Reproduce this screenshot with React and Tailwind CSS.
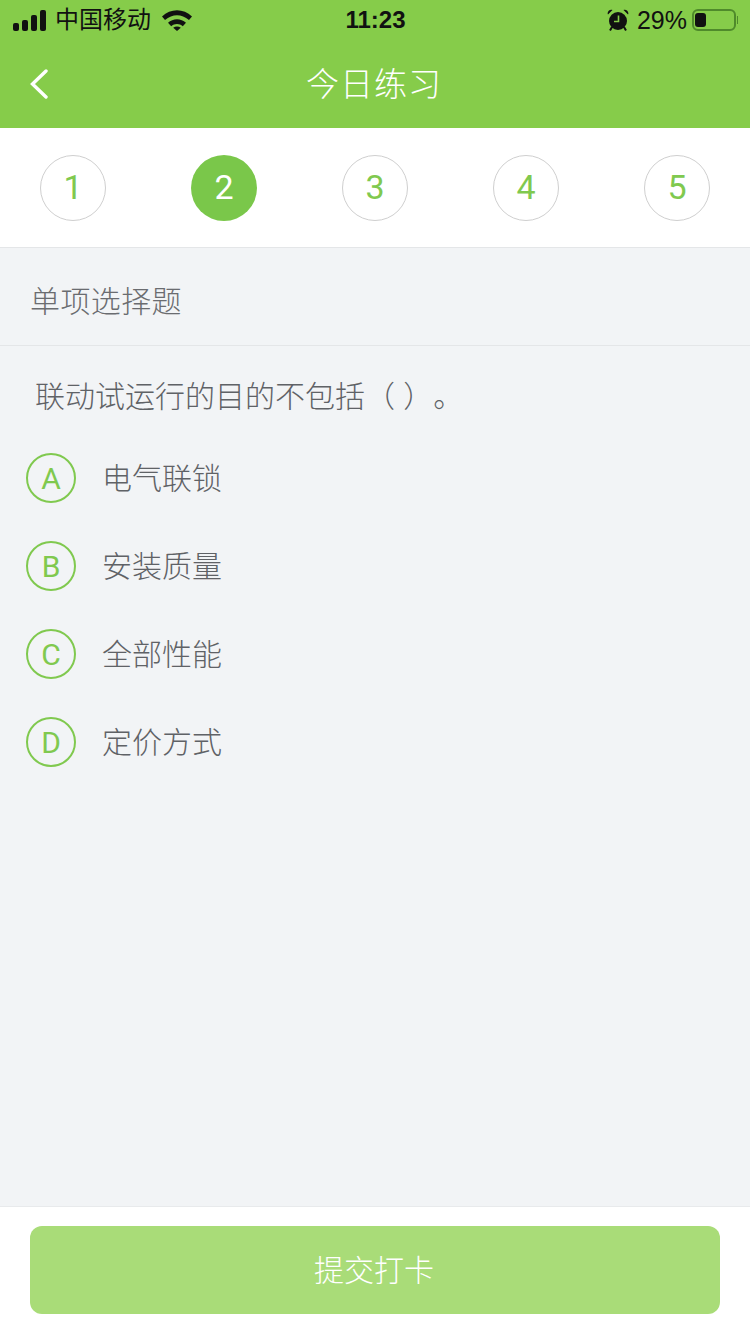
const FONT = "font-['Liberation_Sans','Noto_Sans_CJK_SC',sans-serif]";
const DIGITS = "font-['Roboto','Liberation_Sans',sans-serif] font-normal";

const steps = [1, 2, 3, 4, 5];
const options = [
  { key: 'A', text: '电气联锁' },
  { key: 'B', text: '安装质量' },
  { key: 'C', text: '全部性能' },
  { key: 'D', text: '定价方式' },
];

function SignalIcon() {
  return (
    <svg width="33" height="21" viewBox="0 0 33 21" fill="#111">
      <rect x="0" y="13" width="6" height="8" rx="2" />
      <rect x="9" y="10" width="6" height="11" rx="2" />
      <rect x="18" y="5" width="6" height="16" rx="2" />
      <rect x="27" y="0" width="6" height="21" rx="2" />
    </svg>
  );
}

function WifiIcon() {
  return (
    <svg width="30" height="21" viewBox="0 0 30 21" fill="#111">
      <path d="M0 6.5 C8.5 -2 21.5 -2 30 6.5 L27 10 C19.5 3.5 10.5 3.5 3 10 Z" />
      <path d="M6 12.8 C11 8 19 8 24 12.8 L20.8 16.2 C17.5 13.2 12.5 13.2 9.2 16.2 Z" />
      <path d="M11.2 17.8 C13.5 16 16.5 16 18.8 17.8 L15 21 Z" />
    </svg>
  );
}

function AlarmIcon() {
  return (
    <svg width="22" height="22" viewBox="0 0 22 22">
      <circle cx="11" cy="12" r="9" fill="#111" />
      <path d="M11.5 6.5 V12.5 H7" stroke="#86cc4a" strokeWidth="1.6" fill="none" />
      <path d="M1 5.5 L5.5 1 C3 -0.5 -0.5 3 1 5.5 Z M21 5.5 L16.5 1 C19 -0.5 22.5 3 21 5.5 Z" fill="#111" />
      <path d="M5 18 L3 21.5 M17 18 L19 21.5" stroke="#111" strokeWidth="2" />
    </svg>
  );
}

function BatteryIcon() {
  return (
    <div className="flex items-center gap-[1px]">
      <div className="flex h-[22px] w-[44px] items-center rounded-[6px] border-2 border-[#4f8a2b] px-[1px] py-[2px]">
        <div className="h-full w-[11px] rounded-[3px] bg-[#111]" />
      </div>
      <div className="h-[8px] w-[1px] bg-[#4f8a2b]" />
    </div>
  );
}

function BackIcon() {
  return (
    <svg width="18" height="30" viewBox="0 0 18 30" fill="none" stroke="#fff" strokeWidth="3.4" strokeLinecap="round">
      <path d="M16 2 L2.5 15 L16 28" />
    </svg>
  );
}

export default function App() {
  return (
    <div className={`flex h-[1334px] w-[750px] flex-col overflow-hidden bg-[#f2f4f6] ${FONT}`}>
      <header className="h-[128px] bg-[#86cc4a]">
        <div className="grid h-[40px] grid-cols-[1fr_auto_1fr] items-center pl-[13px] pr-[12px] text-[#111]">
          <div className="flex items-center gap-[9px]">
            <SignalIcon />
            <span className="text-[24px] leading-none">中国移动</span>
            <span className="ml-[2px]"><WifiIcon /></span>
          </div>
          <span className="text-[24px] font-bold leading-none">11:23</span>
          <div className="flex items-center justify-end gap-[8px]">
            <AlarmIcon />
            <span className="mr-[-3px] text-[25px] leading-none">29%</span>
            <BatteryIcon />
          </div>
        </div>
        <div className="relative flex h-[88px] items-center justify-center pr-[2px]">
          <div className="absolute left-[30px] top-[29px]"><BackIcon /></div>
          <h1 className="text-[33px] font-light leading-none tracking-[1px] text-white">今日练习</h1>
        </div>
      </header>

      <nav className="flex h-[120px] items-center justify-between border-b border-[#e4e6e8] bg-white px-[40px]">
        {steps.map((n) => (
          <div
            key={n}
            className={`flex h-[66px] w-[66px] items-center justify-center rounded-full text-[34px] ${DIGITS} ${
              n === 2
                ? 'bg-[#7ac74a] text-white'
                : 'border border-[#cfcfcf] text-[#80c94f]'
            }`}
          >
            {n}
          </div>
        ))}
      </nav>

      <div className="flex h-[98px] items-center border-b border-[#e4e6e8] pl-[30px] pt-[10px] text-[30px] font-light tracking-[0.4px] text-[#6a6c70]">
        单项选择题
      </div>

      <main className="flex-1 px-[26px]">
        <p className="pl-[9px] pt-[36px] text-[30px] font-light leading-none text-[#5f6266] [text-spacing-trim:space-all]">联动试运行的目的不包括（ ）。</p>
        <ul className="mt-[41px] flex flex-col gap-[38px]">
          {options.map((o) => (
            <li key={o.key} className="flex items-center gap-[26px]">
              <span className={`flex h-[50px] w-[50px] items-center justify-center rounded-full border-2 border-[#80c94f] text-[30px] text-[#80c94f] ${DIGITS}`}>
                {o.key}
              </span>
              <span className="text-[30px] font-light text-[#5f6266]">{o.text}</span>
            </li>
          ))}
        </ul>
      </main>

      <footer className="h-[128px] border-t border-[#e8eaec] bg-white px-[30px] pt-[19px]">
        <button className="h-[88px] w-full rounded-[12px] bg-[#a9dc78] pr-[2px] text-[30px] font-light text-white">提交打卡</button>
      </footer>
    </div>
  );
}
